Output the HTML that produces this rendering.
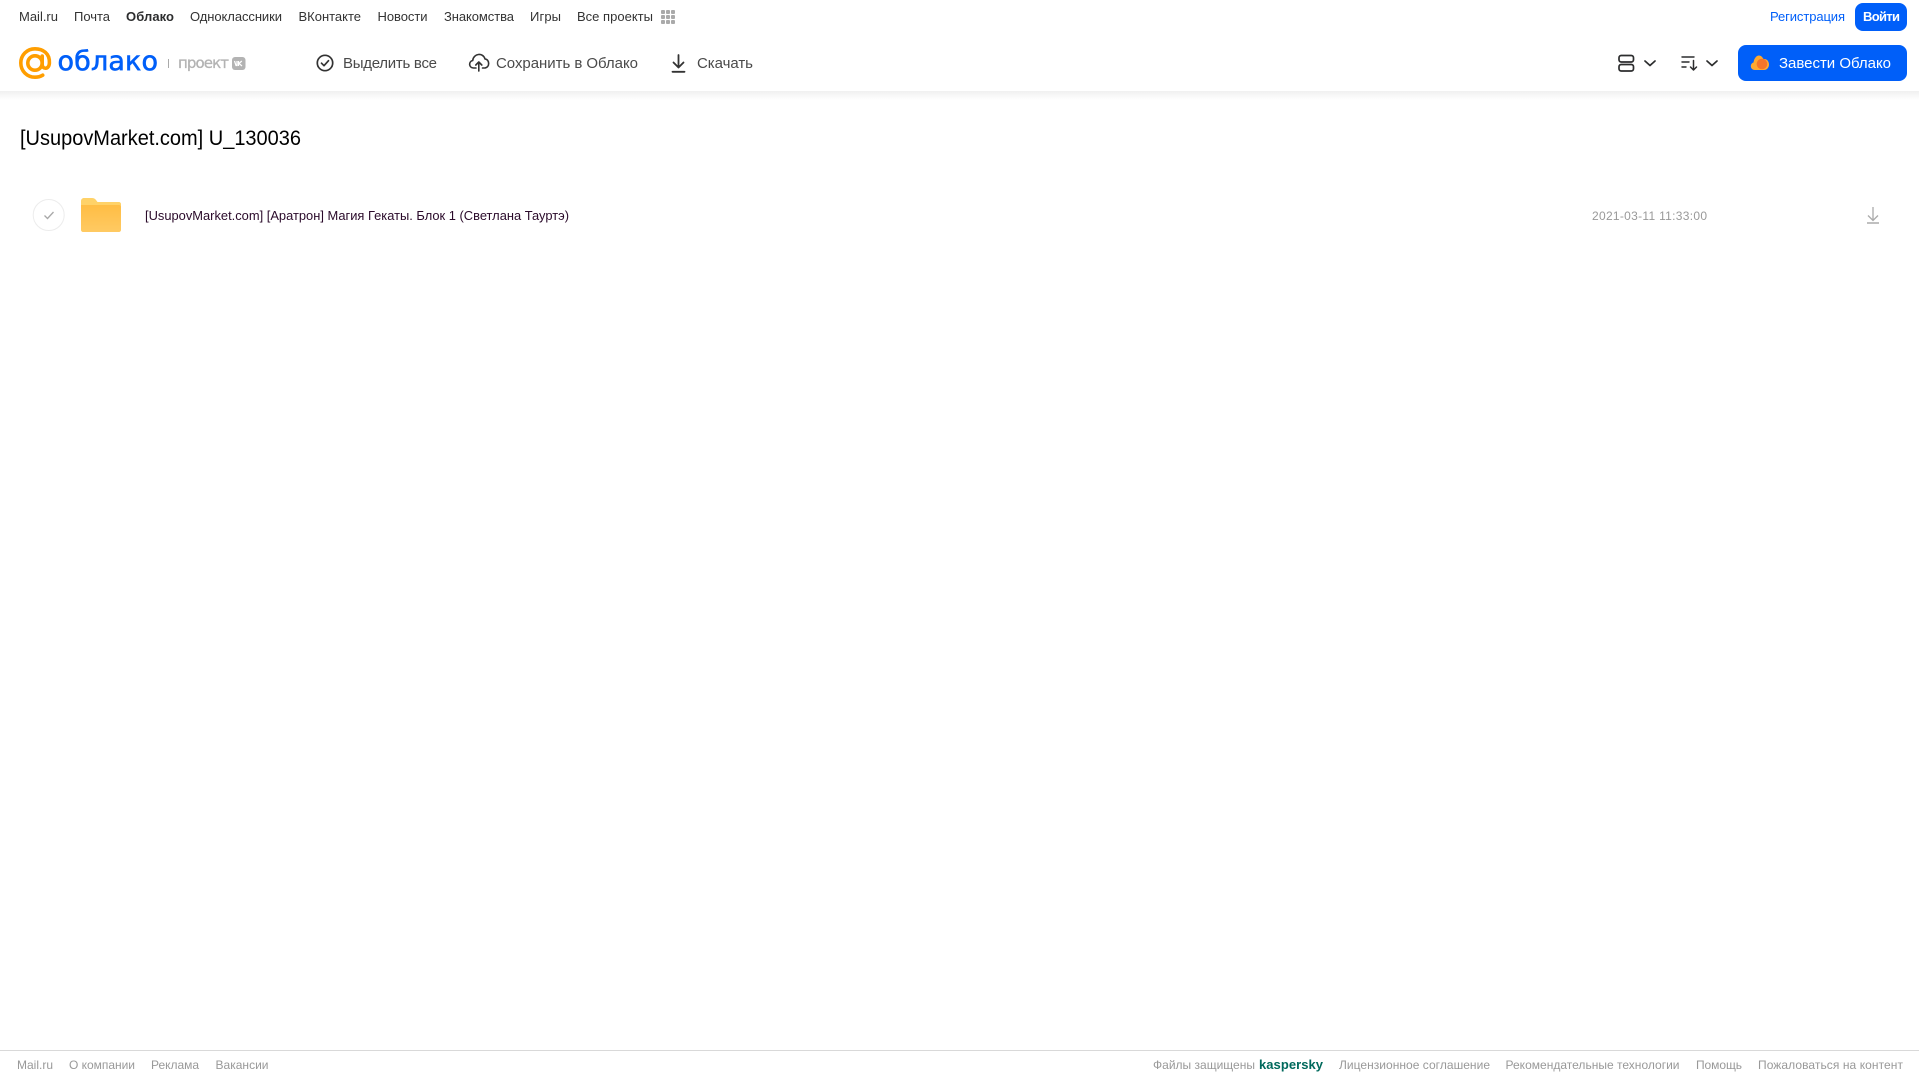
<!DOCTYPE html>
<html lang="ru"><head><meta charset="utf-8"><title>Облако</title>
<style>
html,body{margin:0;padding:0;background:#fff;width:1919px;height:1079px;overflow:hidden}
svg{display:block;position:absolute;left:0;top:0}
text{font-family:"Liberation Sans",sans-serif;white-space:pre}
.n{font-size:13px;fill:#333}
.t{font-size:15px;fill:#4a4a4a}
.f{font-size:12px;fill:#999}
.d{font-family:"DejaVu Sans",sans-serif}
</style></head><body>
<svg width="1919" height="1079" viewBox="0 0 1919 1079" xmlns="http://www.w3.org/2000/svg">
<defs>
<linearGradient id="sh" x1="0" y1="0" x2="0" y2="1"><stop offset="0" stop-color="#f0f0f0"/><stop offset="1" stop-color="#fff"/></linearGradient>
<linearGradient id="fo" x1="0" y1="0" x2="0" y2="1"><stop offset="0" stop-color="#ffbd44"/><stop offset="1" stop-color="#ffca63"/></linearGradient>
</defs>
<rect x="0" y="91" width="1919" height="9" fill="url(#sh)"/>

<!-- top nav -->
<text class="n" x="19" y="21" textLength="39">Mail.ru</text>
<text class="n" x="74" y="21" textLength="36">Почта</text>
<text class="n" x="126" y="21" textLength="48" font-weight="700" style="fill:#2c2d2e">Облако</text>
<text class="n" x="190" y="21" textLength="92">Одноклассники</text>
<text class="n" x="298.500" y="21" textLength="62.500">ВКонтакте</text>
<text class="n" x="377.500" y="21" textLength="50">Новости</text>
<text class="n" x="444" y="21" textLength="70">Знакомства</text>
<text class="n" x="530" y="21" textLength="31">Игры</text>
<text class="n" x="577" y="21" textLength="76">Все проекты</text>
<g fill="#aaa"><rect x="661" y="10" width="4" height="4" rx="1"/><rect x="666" y="10" width="4" height="4" rx="1"/><rect x="671" y="10" width="4" height="4" rx="1"/><rect x="661" y="15" width="4" height="4" rx="1"/><rect x="666" y="15" width="4" height="4" rx="1"/><rect x="671" y="15" width="4" height="4" rx="1"/><rect x="661" y="20" width="4" height="4" rx="1"/><rect x="666" y="20" width="4" height="4" rx="1"/><rect x="671" y="20" width="4" height="4" rx="1"/></g>
<text class="n" x="1770" y="21" textLength="75" style="fill:#005ff9">Регистрация</text>
<rect x="1855" y="3" width="52" height="28" rx="8" fill="#005ff9"/>
<text class="n" x="1863" y="21" textLength="37" font-weight="700" style="fill:#fff">Войти</text>

<!-- logo -->
<g fill="none" stroke="#ff9e00" stroke-width="3.600">
<circle cx="35" cy="63" r="7.200"/>
<path d="M42.200 56v8.500c0 5 6.800 5.500 7.200-1.500C49.900 53.500 43 48.800 35 48.800 27 48.800 20.800 55 20.800 63c0 8 6.200 14.200 14.200 14.200 3 0 5.500-.7 7.700-2" stroke-linecap="round"/>
</g>
<text class="d" x="57.500" y="70" font-size="27" textLength="100.500" style="fill:#005ff9;stroke:#005ff9;stroke-width:.6">облако</text>
<rect x="168" y="59" width="1" height="9" fill="#aaa"/>
<text class="d" x="178" y="68" font-size="15" textLength="51" style="fill:#b3b3b3;stroke:#b3b3b3;stroke-width:.3">проект</text>
<rect x="232" y="57" width="13.500" height="13" rx="3" fill="#b3b3b3"/>
<path d="M234.500 61l1.500 4.500 1 0V61M238.500 61v5M241.800 61l-2.800 2.500 3 2.500" fill="none" stroke="#fff" stroke-width="1.200"/>

<!-- toolbar -->
<g fill="none" stroke="#333" stroke-width="1.700" stroke-linecap="round" stroke-linejoin="round">
<circle cx="325" cy="63" r="7.700"/>
<path d="M321.500 63.200l2.500 2.500 4.500-5"/>
<path d="M476 68h-2.500c-5-.3-5-6.500-.8-7.500 .8-7 10.300-8.500 12.300-1.500 4.800.3 5 8.500-.2 9h-2.300M478.800 71v-9M475.800 65l3-3 3 3" stroke-width="1.600"/>
<path d="M678.500 55v12M673.500 62.500l5 5 5-5" stroke-width="1.800"/>
<path d="M672.500 71.800h12" stroke-width="1.800"/>
</g>
<text class="t" x="343" y="68" textLength="94">Выделить все</text>
<text class="t" x="496" y="68" textLength="142">Сохранить в Облако</text>
<text class="t" x="697" y="68" textLength="56">Скачать</text>

<!-- right controls -->
<g fill="none" stroke="#2c2d2e" stroke-width="1.700" stroke-linecap="round" stroke-linejoin="round">
<rect x="1619" y="55.500" width="14.500" height="6.500" rx="2.200"/>
<rect x="1619" y="64.500" width="14.500" height="6.500" rx="2.200"/>
<path d="M1645 61l5 4.500 5-4.500"/>
<path d="M1707 61l5 4.500 5-4.500"/>
<path d="M1682 57h12M1682 62h7M1682 67h4" stroke-width="1.400"/>
<path d="M1693.500 60.500v9.500M1690.500 67l3 3 3-3" stroke-width="1.500"/>
</g>
<rect x="1738" y="45" width="169" height="36" rx="8" fill="#005ff9"/>
<path d="M1755 70c-5 0-5.500-6.500-1.500-7.500 .5-3.500 2.500-7 5.500-7 2.500 0 3.500 2 4.500 3.500 3.500-.5 5.500 2.500 5.500 5.500 0 3-2 5.500-5 5.500z" fill="#ffa930"/>
<circle cx="1762" cy="64" r="5.300" fill="#f4752a"/>
<text x="1779" y="68" font-size="15" textLength="112" style="fill:#fff">Завести Облако</text>

<!-- content -->
<text x="20" y="145" font-size="21" textLength="281" lengthAdjust="spacingAndGlyphs" style="fill:#000">[UsupovMarket.com] U_130036</text>
<circle cx="48.700" cy="215" r="15.500" fill="#fff" stroke="#ececec" stroke-width="1"/>
<path d="M44.500 215.500l3 3 6-6.500" fill="none" stroke="#a8a8a8" stroke-width="1.300"/>
<path d="M81 201c0-1.700 1.300-3 3-3h8c1.800 0 3 .8 4 2l1.500 2H119c1.100 0 2 .9 2 2v4H81z" fill="#ffd268"/>
<path d="M81 205h38c1.100 0 2 .9 2 2v23c0 1.100-.9 2-2 2H83c-1.100 0-2-.9-2-2z" fill="url(#fo)"/>
<text x="145" y="220" font-size="13" textLength="424" lengthAdjust="spacingAndGlyphs" style="fill:#2a0a2a">[UsupovMarket.com] [Аратрон] Магия Гекаты. Блок 1 (Светлана Тауртэ)</text>
<text x="1592" y="220" font-size="12" textLength="115" style="fill:#999">2021-03-11 11:33:00</text>
<g fill="none" stroke="#aaa" stroke-width="1.300"><path d="M1873 207v13M1868 215.500l5 5 5-5"/><path d="M1867 223h12" stroke-width="1.500"/></g>

<!-- footer -->
<rect x="0" y="1050" width="1919" height="1" fill="#d9d9d9"/>
<text class="f" x="17" y="1069" textLength="36">Mail.ru</text>
<text class="f" x="69" y="1069" textLength="66">О компании</text>
<text class="f" x="151" y="1069" textLength="48">Реклама</text>
<text class="f" x="215.500" y="1069" textLength="53">Вакансии</text>
<text class="f" x="1153" y="1069" textLength="102">Файлы защищены</text>
<text x="1259" y="1069" font-size="13" font-weight="700" textLength="64" style="fill:#00695c">kaspersky</text>
<text class="f" x="1339" y="1069" textLength="151">Лицензионное соглашение</text>
<text class="f" x="1505.500" y="1069" textLength="174">Рекомендательные технологии</text>
<text class="f" x="1696" y="1069" textLength="46">Помощь</text>
<text class="f" x="1758" y="1069" textLength="145">Пожаловаться на контент</text>
</svg>
</body></html>
